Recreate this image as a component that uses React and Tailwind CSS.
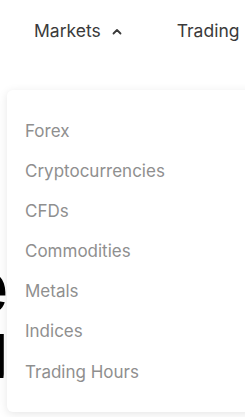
export default function App() {
  const items = ["Forex", "Cryptocurrencies", "CFDs", "Commodities", "Metals", "Indices", "Trading Hours"];
  return (
    <div className="relative w-[245px] h-[417px] overflow-hidden bg-white" style={{ fontFamily: "Inter, 'Noto Sans', sans-serif" }}>
      <div className="flex items-center h-[62px] pl-[34px] gap-[55px] text-[17.5px] text-[#3a3a3a] whitespace-nowrap">
        <div className="flex items-center gap-[11px]">
          <span>Markets</span>
          <svg width="10" height="7" viewBox="0 0 10 7" className="mt-[1px]">
            <path d="M1.5 5.5 L5 2 L8.5 5.5" fill="none" stroke="#3a3a3a" strokeWidth="1.8" strokeLinecap="round" strokeLinejoin="round" />
          </svg>
        </div>
        <span>Trading</span>
      </div>
      <div className="mt-[192px] flex flex-col items-end w-[8px] overflow-hidden">
        <span className="font-extrabold text-black text-[76px] leading-[62px]">e</span>
        <span className="font-extrabold text-black text-[76px] leading-[62px]">g</span>
      </div>
      <div className="absolute left-[7px] top-[90px] w-[260px] h-[322px] bg-white rounded-[6px] shadow-[0_2px_10px_rgba(0,0,0,0.10)] pt-[21px] pl-[18px]">
        <ul className="flex flex-col text-[17px] text-[#8f8f8f]">
          {items.map((t) => (
            <li key={t} className="h-[40.1px] leading-[40px] whitespace-nowrap">{t}</li>
          ))}
        </ul>
      </div>
    </div>
  );
}
